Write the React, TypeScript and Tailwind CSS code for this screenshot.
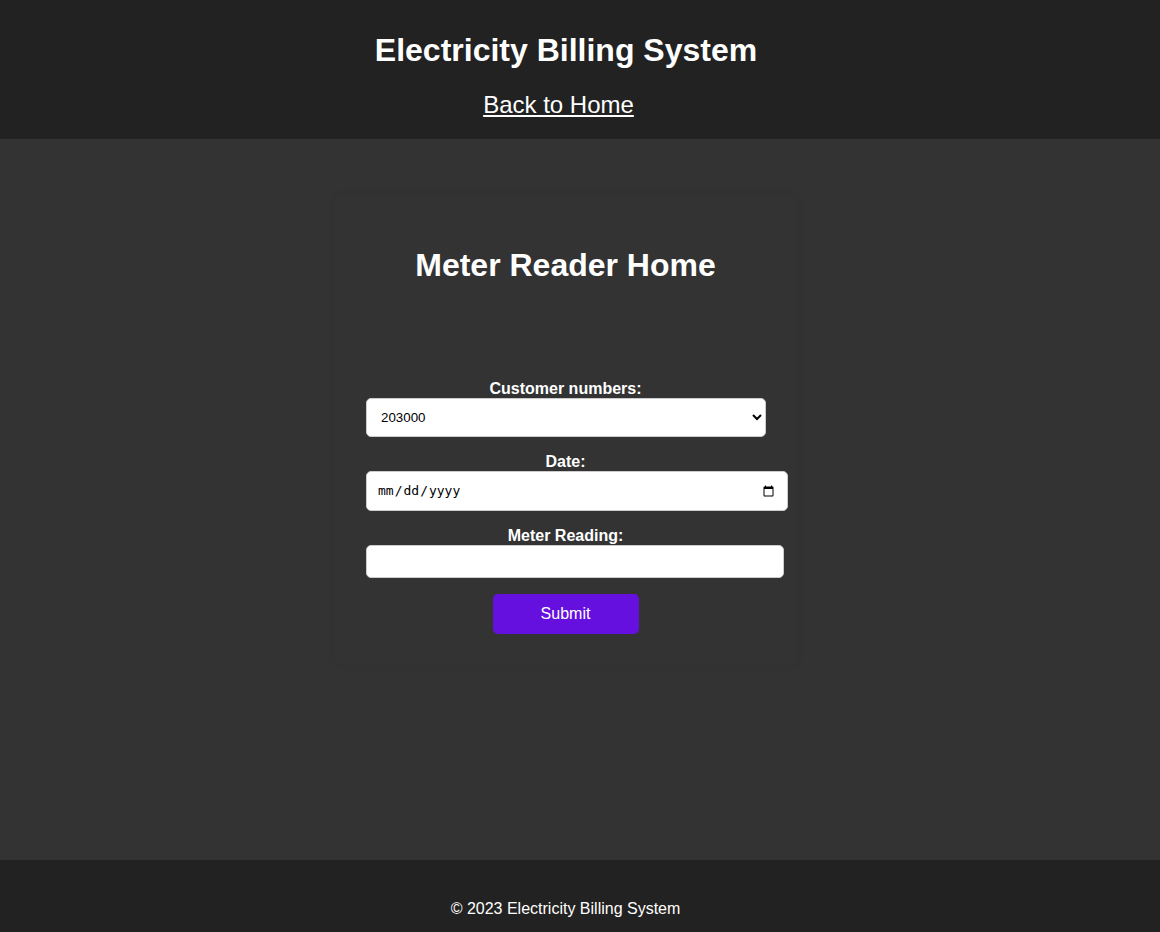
import React, { useState } from 'react';

const customers = ['203000', '203001', '203002', '203003'];

const App = () => {
  const [customer, setCustomer] = useState(customers[0]);
  const [date, setDate] = useState('');
  const [reading, setReading] = useState('');

  return (
    <div className="min-h-screen flex flex-col bg-[#333333] text-white font-['Liberation_Sans',Arial,sans-serif]">
      {/* header */}
      <header className="bg-[#222222] h-[139px] flex flex-col items-center pt-[32px]">
        <h1 className="text-[32px] font-bold leading-[37px] pr-[28px]">Electricity Billing System</h1>
        <a href="#" className="text-[24px] leading-[28px] underline mt-[22px] pr-[43px]">
          Back to Home
        </a>
      </header>

      <main className="flex-1 flex justify-center pt-[56px] pr-[29px]">
        <div className="w-[463px] h-[470px] bg-[#333333] rounded-lg shadow-[0_0_8px_rgba(0,0,0,0.08)] px-8 pt-[52px]">
          <h2 className="text-[32px] font-bold leading-[37px] text-center">Meter Reader Home</h2>

          <form className="mt-[96px] flex flex-col" onSubmit={(e) => e.preventDefault()}>
            <label className="text-center font-bold text-base leading-[18px]">Customer numbers:</label>
            <select
              value={customer}
              onChange={(e) => setCustomer(e.target.value)}
              className="w-[400px] h-[39px] bg-white text-black text-[13.33px] px-[10px] rounded-[5px] border border-[#cccccc] font-['Liberation_Sans',Arial,sans-serif]"
            >
              {customers.map((c) => (
                <option key={c} value={c}>{c}</option>
              ))}
            </select>

            <label className="mt-[16px] text-center font-bold text-base leading-[18px]">Date:</label>
            <input
              type="date"
              value={date}
              onChange={(e) => setDate(e.target.value)}
              className="w-[422px] h-[40px] bg-white text-black text-[13px] px-[10px] rounded-[5px] border border-[#cccccc] font-['DejaVu_Sans_Mono',monospace]"
            />

            <label className="mt-[16px] text-center font-bold text-base leading-[18px]">Meter Reading:</label>
            <input
              type="text"
              value={reading}
              onChange={(e) => setReading(e.target.value)}
              className="w-[418px] h-[33px] bg-white text-black text-[13px] px-2 rounded-[5px] border border-[#cccccc]"
            />

            <button
              type="submit"
              className="mt-4 self-center w-[146px] h-10 bg-[#6610e0] text-white text-base rounded-[5px]"
            >
              Submit
            </button>
          </form>
        </div>
      </main>

      <footer className="bg-[#222222] h-[72px] pt-[40px] text-center text-base leading-[18px] pr-[29px]">
        © 2023 Electricity Billing System
      </footer>
    </div>
  );
};

export default App;
